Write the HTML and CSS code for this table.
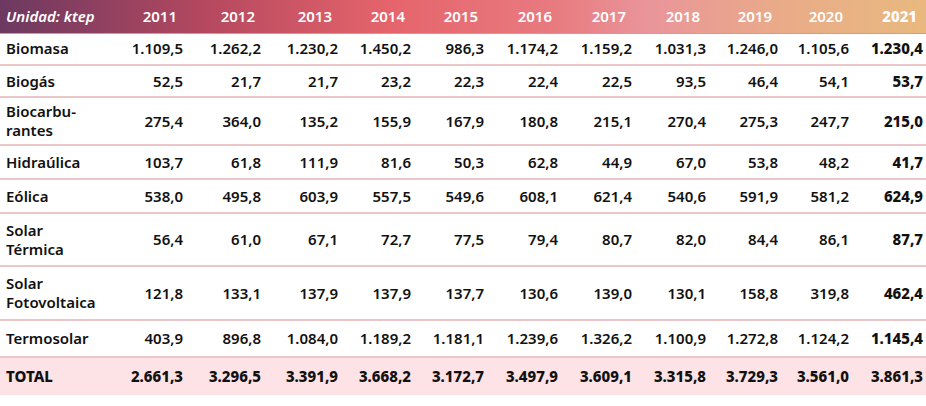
FILE: index.html
```html
<!DOCTYPE html>
<html lang="es">
<head>
    <meta charset="UTF-8">
    <meta name="viewport" content="width=device-width, initial-scale=1.0">
    <title>Energías renovables - ktep</title>

    <link rel="stylesheet" href="styles.css">
</head>
<body>
    <table class="energy">
        <colgroup>
            <col class="c-label">
            <col class="c78"><col class="c78"><col class="c77">
            <col class="c73"><col class="c73"><col class="c74">
            <col class="c74"><col class="c74"><col class="c72">
            <col class="c71"><col class="c74">
        </colgroup>
        <thead>
            <tr>
                <th class="unit">Unidad: ktep</th>
                <th>2011</th><th>2012</th><th>2013</th><th>2014</th><th>2015</th><th>2016</th>
                <th>2017</th><th>2018</th><th>2019</th><th>2020</th><th class="last">2021</th>
            </tr>
        </thead>
        <tbody>
            <tr class="r32">
                <td>Biomasa</td>
                <td>1.109,5</td><td>1.262,2</td><td>1.230,2</td><td>1.450,2</td><td>986,3</td><td>1.174,2</td>
                <td>1.159,2</td><td>1.031,3</td><td>1.246,0</td><td>1.105,6</td><td class="last">1.230,4</td>
            </tr>
            <tr class="r32">
                <td>Biogás</td>
                <td>52,5</td><td>21,7</td><td>21,7</td><td>23,2</td><td>22,3</td><td>22,4</td>
                <td>22,5</td><td>93,5</td><td>46,4</td><td>54,1</td><td class="last">53,7</td>
            </tr>
            <tr class="r48">
                <td>Biocarbu-<br>rantes</td>
                <td>275,4</td><td>364,0</td><td>135,2</td><td>155,9</td><td>167,9</td><td>180,8</td>
                <td>215,1</td><td>270,4</td><td>275,3</td><td>247,7</td><td class="last">215,0</td>
            </tr>
            <tr class="r34">
                <td>Hidraúlica</td>
                <td>103,7</td><td>61,8</td><td>111,9</td><td>81,6</td><td>50,3</td><td>62,8</td>
                <td>44,9</td><td>67,0</td><td>53,8</td><td>48,2</td><td class="last">41,7</td>
            </tr>
            <tr class="r34">
                <td>Eólica</td>
                <td>538,0</td><td>495,8</td><td>603,9</td><td>557,5</td><td>549,6</td><td>608,1</td>
                <td>621,4</td><td>540,6</td><td>591,9</td><td>581,2</td><td class="last">624,9</td>
            </tr>
            <tr class="r53">
                <td>Solar<br>Térmica</td>
                <td>56,4</td><td>61,0</td><td>67,1</td><td>72,7</td><td>77,5</td><td>79,4</td>
                <td>80,7</td><td>82,0</td><td>84,4</td><td>86,1</td><td class="last">87,7</td>
            </tr>
            <tr class="r54">
                <td>Solar<br>Fotovoltaica</td>
                <td>121,8</td><td>133,1</td><td>137,9</td><td>137,9</td><td>137,7</td><td>130,6</td>
                <td>139,0</td><td>130,1</td><td>158,8</td><td>319,8</td><td class="last">462,4</td>
            </tr>
            <tr class="r37">
                <td>Termosolar</td>
                <td>403,9</td><td>896,8</td><td>1.084,0</td><td>1.189,2</td><td>1.181,1</td><td>1.239,6</td>
                <td>1.326,2</td><td>1.100,9</td><td>1.272,8</td><td>1.124,2</td><td class="last">1.145,4</td>
            </tr>
        </tbody>
        <tfoot>
            <tr class="total">
                <td>TOTAL</td>
                <td>2.661,3</td><td>3.296,5</td><td>3.391,9</td><td>3.668,2</td><td>3.172,7</td><td>3.497,9</td>
                <td>3.609,1</td><td>3.315,8</td><td>3.729,3</td><td>3.561,0</td><td>3.861,3</td>
            </tr>
        </tfoot>
    </table>
</body>
</html>
```

FILE: styles.css
```css
*{
    margin: 0;
    padding: 0;
    box-sizing: border-box
}

body{
    background-color: #fff;
    font-family: "Noto Sans", "Open Sans", sans-serif;
    color: #111;
}

.energy{
    width: 926px;
    border-collapse: collapse;
    table-layout: fixed;
    font-size: 15px;
    line-height: 19px;
}

.c-label{ width: 108px; }
.c78{ width: 78px; }
.c77{ width: 77px; }
.c74{ width: 74px; }
.c73{ width: 73px; }
.c72{ width: 72px; }
.c71{ width: 71px; }

.energy thead tr{
    height: 33px;
    background: linear-gradient(90deg, #6c3961 0%, #b4485f 22%, #e5646b 42%, #e87b80 60%, #e9959a 70%, #e9ac88 85%, #e8b97f 100%);
    border-bottom: 1px solid #d9959a;
}

.energy th{
    color: #fff;
    font-weight: 600;
    text-align: right;
    padding-right: 9px;
    vertical-align: middle;
}

.energy th.unit{
    text-align: left;
    padding-left: 6px;
    padding-right: 0;
    font-style: italic;
    font-weight: 600;
    white-space: nowrap;
}

.energy th.last{
    font-weight: 800;
}

.energy td{
    text-align: right;
    padding-right: 3px;
    font-weight: 600;
    vertical-align: middle;
    border-bottom: 2px solid #eac6c9;
}

.energy td:first-child{
    text-align: left;
    padding-left: 6px;
    padding-right: 0;
}

.energy td.last{
    font-weight: 800;
}

.r32{ height: 32px; }
.r34{ height: 34px; }
.r37{ height: 37px; }
.r48{ height: 48px; }
.r53{ height: 53px; }
.r54{ height: 54px; }

.total{
    height: 38px;
    background-color: #fde3e6;
}

.total td{
    font-weight: 800;
    border-bottom: none;
}
```
